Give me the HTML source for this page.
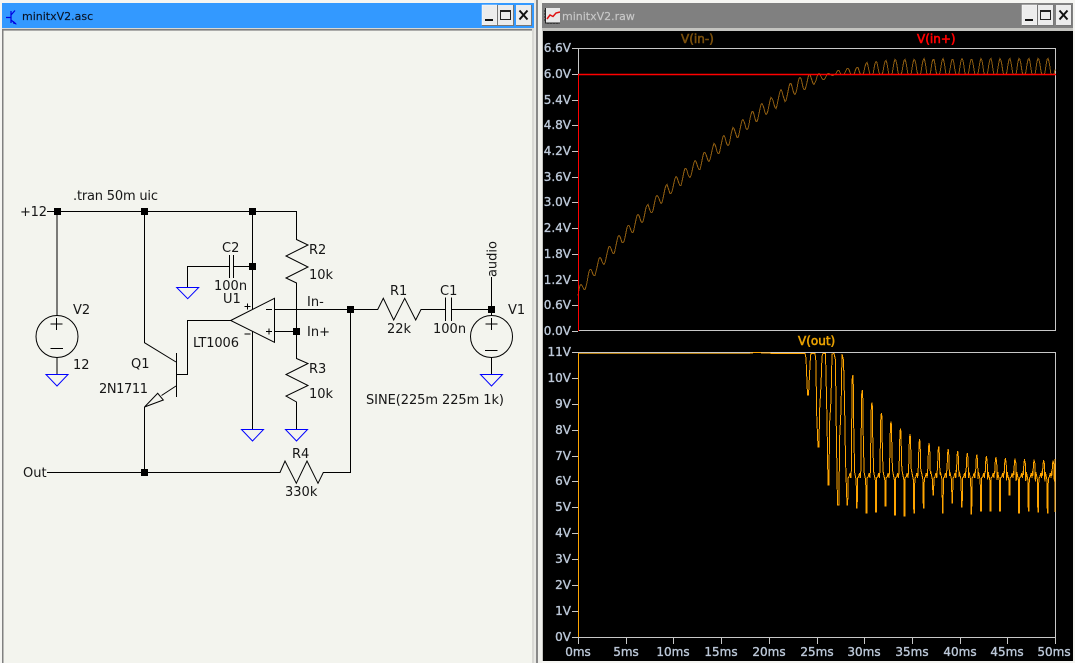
<!DOCTYPE html>
<html><head><meta charset="utf-8"><style>
html,body{margin:0;padding:0;width:1075px;height:663px;overflow:hidden;background:#f4f4f0}
svg{display:block}
.s text{font:13px "DejaVu Sans",sans-serif;fill:#161616}
.a text{font:12px "DejaVu Sans",sans-serif;fill:#bcc8d8;stroke:#bcc8d8;stroke-width:.35}
.t{font:11px "DejaVu Sans",sans-serif}
.w{fill:none;stroke:#000;stroke-width:1}
.g{fill:none;stroke:#00f;stroke-width:1}
.n{fill:#000}
</style></head><body>
<svg width="1075" height="663" viewBox="0 0 1075 663" xmlns="http://www.w3.org/2000/svg">
<rect width="1075" height="663" fill="#f5f5f2"/>
<rect x="2" y="3" width="532" height="25" fill="#3399ff"/>
<rect x="2" y="28" width="532" height="635" fill="#d8d8d4"/>
<rect x="2" y="29" width="530" height="1.5" fill="#808080"/>
<rect x="2" y="29" width="1.5" height="634" fill="#808080"/>
<rect x="3.5" y="31" width="528.5" height="632" fill="#f3f4ee"/>
<rect x="534" y="0" width="2" height="663" fill="#e8e8e4"/>
<rect x="536" y="0" width="2" height="663" fill="#888"/>
<rect x="538" y="0" width="4" height="663" fill="#f0f0ec"/>
<rect x="542" y="3" width="531" height="25" fill="#808080"/>
<rect x="542" y="28" width="531" height="633" fill="#c4c4c0"/>
<rect x="543" y="31" width="530" height="630" fill="#000"/>

<!-- title icons -->
<g fill="none" stroke="#0000e0" stroke-width="1.2">
<path d="M6 17.5H11M11 11V23M11 15L15 10.500M11 20L16 24"/>
</g>
<path d="M13.500 21L17 24.500L13 23.500Z" fill="#0000e0"/>
<text x="22" y="20" class="t" fill="#0a1426" stroke="#0a1426" stroke-width=".15">minitxV2.asc</text>
<rect x="545" y="8" width="15" height="15" fill="#e8e8e8"/>
<path d="M545.500 8V23H560" fill="none" stroke="#222" stroke-width="1"/>
<path d="M544 11h2M544 14h2M544 17h2M544 20h2M548 22.500v1.500M551 22.500v1.500M554 22.500v1.500M557 22.500v1.500" stroke="#222"/>
<path d="M547 19L550 15L553 16.500L556 13L560 12" fill="none" stroke="#e01010" stroke-width="1.500"/>
<text x="562" y="20" class="t" fill="#c8c8c8" stroke="#c8c8c8" stroke-width=".15">minitxV2.raw</text>

<!-- buttons -->
<g id="b1">
<rect x="482" y="5" width="15" height="20" fill="#ececec" stroke="#fff" stroke-width=".5"/><path d="M497.500 5V25.500H482" stroke="#777" fill="none"/>
<rect x="485" y="19" width="8" height="2" fill="#111"/>
<rect x="498" y="5" width="15" height="20" fill="#ececec"/><path d="M513.500 5V25.500H498" stroke="#777" fill="none"/>
<rect x="500.500" y="10.500" width="10" height="9" fill="none" stroke="#222"/><path d="M500.500 11.500H510.500" stroke="#222"/>
<rect x="516" y="5" width="15" height="20" fill="#ececec"/><path d="M531.500 5V25.500H516" stroke="#777" fill="none"/>
<path d="M519.500 10.500L527.500 19.500M527.500 10.500L519.500 19.500" stroke="#111" stroke-width="2"/>
</g>
<use href="#b1" x="540"/>

<!-- schematic -->
<g class="w">
<path d="M47 211.500H297M57 211V315.500M144.500 211V342.700L176 362M296.500 211V239.500L308 245L286 256L308 267L286 278L296.500 283V358.500L308 363.500L286 374.500L308 385.500L286 396L296.500 402V429.500"/>
<path d="M176.500 353V397M176 374.500H187.500V320.500H230.500M176 386L161.500 395.500M144.500 407V472M47 472.500H280L285 461L296.300 483.300L307 461L318 483.300L323.300 472.500H350.500V309"/>
<path d="M230.700 320.500L274.500 298.300V342.300Z"/>
<path d="M252.500 211V309.500M252.500 331V429.500M252.500 266.500H233.500M229.500 266.500H187.500V287.500M229.500 255V278M233.500 255V278"/>
<path d="M274 309.500H377.700L383.300 298.300L393.700 320L404.700 298.300L415.700 320L421 309.500H445.500M451.500 309.500H491.500M445.500 297.500V321M451.500 297.500V321M274 331.500H296.500M491.500 277V315M491.500 357.500V374.500M57 357.500V374.500"/>
<circle cx="57" cy="336.500" r="21"/><circle cx="491.500" cy="336.500" r="21"/>
<path d="M50.500 324H62.500M56.500 318V330M50.500 348.500H63M485.500 324H497.500M491.500 318V330M485 350.500H497.500"/>
<path d="M244.500 306.500H250.500M247.500 303.500V309.500M244.500 334H250.500M266 309.500H272M266 331.500H272M269 328.500V334.500"/>
<path d="M144.500 407L157.700 393.300L163.300 400Z"/>
</g>
<g class="g">
<path d="M46 374.500H68L57 386ZM480.500 374.500H502.500L491.500 386ZM176.700 287.500H198.700L187.700 298.700ZM241.500 429.500H263.500L252.500 441ZM285.500 429.500H307.500L296.500 441Z"/>
</g>
<g class="n">
<rect x="54" y="208" width="7" height="7"/><rect x="141" y="208" width="7" height="7"/><rect x="249" y="208" width="7" height="7"/>
<rect x="249" y="263" width="7" height="7"/><rect x="347" y="306" width="7" height="7"/><rect x="293" y="328" width="7" height="7"/>
<rect x="488" y="306" width="7" height="7"/><rect x="141" y="469" width="7" height="7"/>
</g>
<g class="s">
<text x="73" y="200" textLength="85">.tran 50m uic</text>
<text x="20" y="216" textLength="27">+12</text>
<text x="222" y="252">C2</text>
<text x="214" y="290">100n</text>
<text x="223" y="303">U1</text>
<text x="73" y="314">V2</text>
<text x="73" y="369">12</text>
<text x="193" y="347" textLength="46">LT1006</text>
<text x="131" y="368">Q1</text>
<text x="99" y="393" textLength="49">2N1711</text>
<text x="309" y="254">R2</text>
<text x="309" y="279">10k</text>
<text x="309" y="373">R3</text>
<text x="309" y="398">10k</text>
<text x="292" y="458">R4</text>
<text x="285" y="496">330k</text>
<text x="307" y="306">In-</text>
<text x="307" y="336">In+</text>
<text x="390" y="295">R1</text>
<text x="387" y="333">22k</text>
<text x="440" y="295">C1</text>
<text x="433" y="333">100n</text>
<text x="508" y="314">V1</text>
<text x="366" y="404" textLength="138">SINE(225m 225m 1k)</text>
<text x="23" y="477">Out</text>
<text transform="translate(496.500 277) rotate(-90)" textLength="36">audio</text>
</g>

<path id="tr2b" fill="none" stroke="#b07a10" stroke-width="1" shape-rendering="crispEdges" d="M578 353.500H750"/>
<!-- plot frames -->
<g fill="none" stroke="#c8c8c8" stroke-width="1" shape-rendering="crispEdges">
<rect x="578.500" y="48.500" width="477" height="282"/>
<rect x="578.500" y="352.500" width="477" height="285"/>
<path d="M572 48.500h6M572 74.500h6M572 100.500h6M572 125.500h6M572 151.500h6M572 177.500h6M572 202.500h6M572 228.500h6M572 254.500h6M572 280.500h6M572 305.500h6M572 331.500h6"/>
<path d="M572 352.500h6M572 378.500h6M572 404.500h6M572 430.500h6M572 456.500h6M572 481.500h6M572 507.500h6M572 533.500h6M572 559.500h6M572 585.500h6M572 611.500h6M572 637.500h6"/>
<path d="M578.500 637v7M626.500 637v7M673.500 637v7M721.500 637v7M769.500 637v7M817.500 637v7M864.500 637v7M912.500 637v7M960.500 637v7M1007.500 637v7M1055.500 637v7"/>
</g>

<path id="tr1" fill="none" stroke="#8a5a10" stroke-width="1" shape-rendering="crispEdges" d=""/>
<path d="M578.500 331V74.500" fill="none" stroke="#ff0000" stroke-width="1" shape-rendering="crispEdges"/>
<path d="M578 74.500H1056" fill="none" stroke="#ff0000" stroke-width="1.500"/>
<path d="M578.500 637V353" fill="none" stroke="#ffa500" stroke-width="1" shape-rendering="crispEdges"/>
<path id="tr2" fill="none" stroke="#ffa500" stroke-width="1" shape-rendering="crispEdges" d=""/>

<g class="a" text-anchor="end">
<text x="571" y="52">6.6V</text><text x="571" y="78">6.0V</text><text x="571" y="104">5.4V</text><text x="571" y="129">4.8V</text><text x="571" y="155">4.2V</text><text x="571" y="181">3.6V</text><text x="571" y="206">3.0V</text><text x="571" y="232">2.4V</text><text x="571" y="258">1.8V</text><text x="571" y="284">1.2V</text><text x="571" y="309">0.6V</text><text x="571" y="335">0.0V</text>
<text x="571" y="356">11V</text><text x="571" y="382">10V</text><text x="571" y="408">9V</text><text x="571" y="434">8V</text><text x="571" y="460">7V</text><text x="571" y="485">6V</text><text x="571" y="511">5V</text><text x="571" y="537">4V</text><text x="571" y="563">3V</text><text x="571" y="589">2V</text><text x="571" y="615">1V</text><text x="571" y="641">0V</text>
</g>
<g class="a" text-anchor="middle">
<text x="578" y="656">0ms</text><text x="626" y="656">5ms</text><text x="673" y="656">10ms</text><text x="721" y="656">15ms</text><text x="769" y="656">20ms</text><text x="817" y="656">25ms</text><text x="864" y="656">30ms</text><text x="912" y="656">35ms</text><text x="960" y="656">40ms</text><text x="1007" y="656">45ms</text><text x="1054" y="656">50ms</text>
</g>
<g style="font:12px 'DejaVu Sans',sans-serif">
<text x="681" y="43" fill="#7a4f0c" stroke="#7a4f0c" stroke-width=".6">V(in-)</text>
<text x="917" y="43" fill="#ff0000" stroke="#ff0000" stroke-width=".6">V(in+)</text>
<text x="798" y="345" fill="#e8a000" stroke="#e8a000" stroke-width=".6">V(out)</text>
</g>
</svg>
<script>
(function(){
var tbl=[[578,289],[590,269],[600,257],[619,235],[638,214],[657,195],[667,184],[762,103],[772,97],[782,89],[791,83],[800,77],[810,74],[835,73],[838,70],[848,68],[857,67],[867,62],[877,61],[886,60],[895,59],[1056,58]];
function pk(x){for(var i=1;i<tbl.length;i++){if(x<=tbl[i][0]){var a=tbl[i-1],b=tbl[i];return a[1]+(b[1]-a[1])*(x-a[0])/(b[0]-a[0]);}}return 58;}
var d=[],x,t,y;
for(x=578;x<=1055;x+=1){
 t=(x-578)/9.54;
 var s=Math.sin(2*Math.PI*t),c=(1-s)/2,p0=pk(x);
 if(x<810){y=p0+c*(12+(x-578)*0.012);}
 else if(x<835){y=p0+c*(12-(x-810)*0.42);}
 else{var b=Math.min(1,c*1.35);y=Math.min(74.5,p0+b*(74.5-p0));}
 y=Math.round(y-.5)+.5;
 d.push((d.length?'L':'M')+x+' '+y);
}
document.getElementById('tr1').setAttribute('d',d.join(''));
var p=[[750,353],[756,352.5],[775,353.5],[805,353.5],[806,358],[807.5,395],[808.5,395],[809.5,375],[810.500,356],[811,353.5],[815,353.5],[816,362],[816.500,410],[818,447],[819,447],[819.500,412],[821,385],[822,356],[823,353.5],[825.500,353.5],[826,375],[827,420],[828,485],[829,485],[829.500,425],[831,400],[832,354],[834,353.5],[835.500,360],[836,410],[837.500,505],[839,505],[839.500,440],[841,410],[842,354],[843.500,360],[844.500,400],[845.500,460],[847,505]];
var low=[505,508,513,512,506,515,516,513,508,495,513,503,507,514,511,511,511,495,513,511,512,513,510,508,512,510];
var i,X,R=475;
for(i=0;i<22;i++){
 X=847+i*9.54;
 var yb=low[i],yb2=low[i+1],xp=X+5.8;
 var top=462-108*Math.exp(-(xp-842)/50);
 var mid=(top+R)/2;
 p.push([X+.7,yb],[X+1,R+3],[X+2,R+2],[X+3,R-2],[X+3.8,R+3],[X+4.3,R-4]);
 p.push([X+4.6,mid+8],[X+5.2,top+4],[xp,top],[X+6.2,top+3],[X+6.6,mid-4],[X+7,mid+14],[X+7.6,R-3]);
 p.push([X+8.6,R+2],[X+9.2,R+5]);
 if(X+9.54<1056)p.push([X+9.54,yb2]);
}
var s2='';
for(i=0;i<p.length;i++){if(p[i][0]>1055.5)break;s2+=(i?'L':'M')+p[i][0].toFixed(1)+' '+p[i][1].toFixed(1);}
s2+='L1055 459L1055 512';
document.getElementById('tr2').setAttribute('d',s2);
})();
</script>
</body></html>
